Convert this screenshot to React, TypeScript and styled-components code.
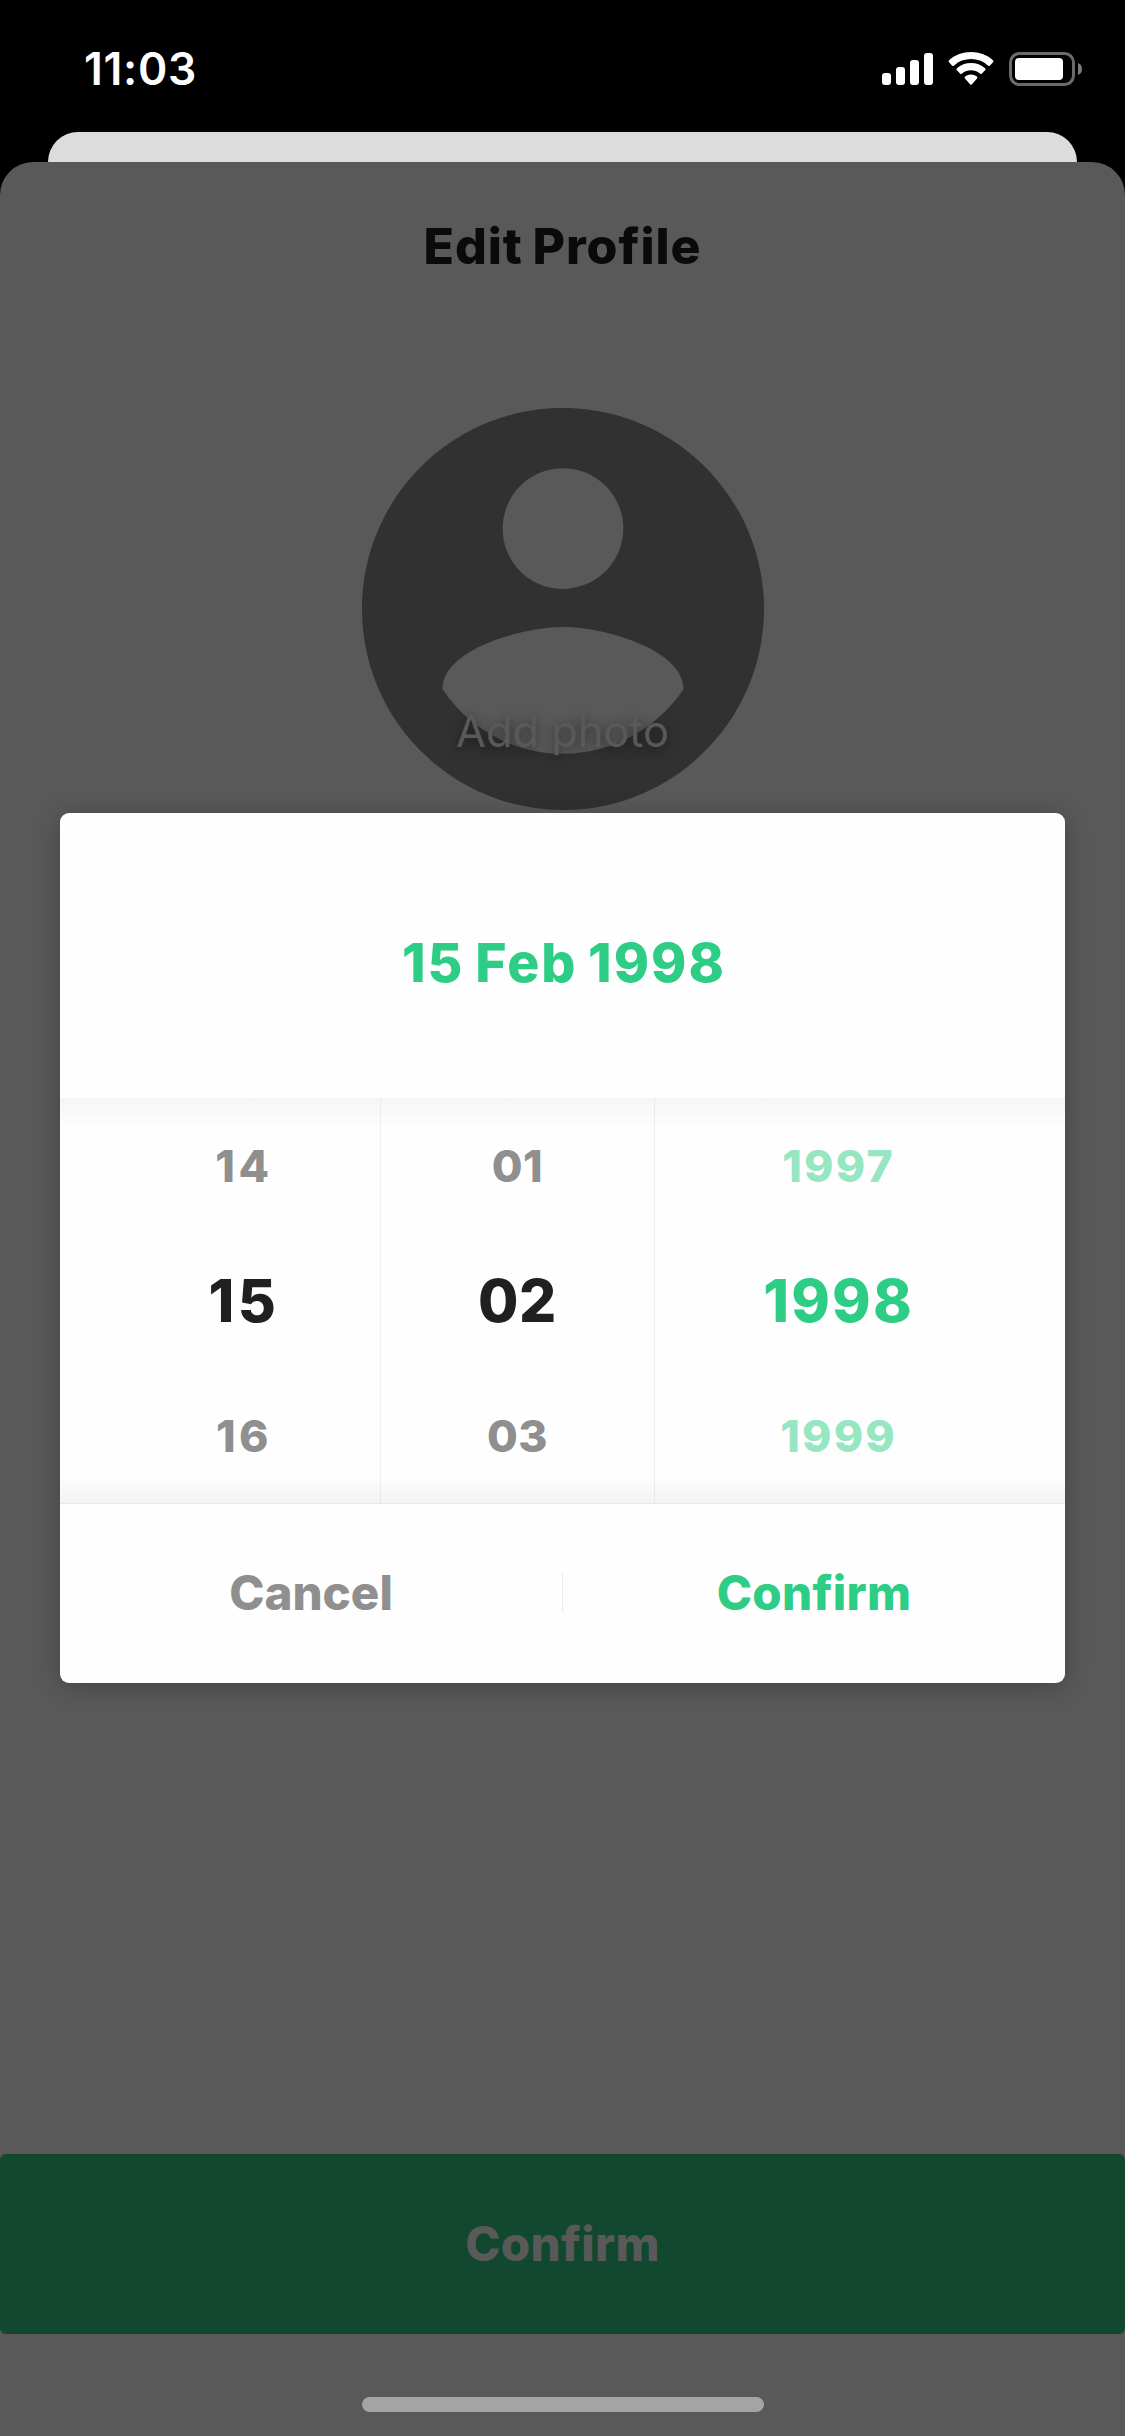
import React from "react";
import styled, { createGlobalStyle } from "styled-components";

const GlobalStyle = createGlobalStyle`
  * { box-sizing: border-box; }
  body {
    margin: 0;
    background: #000;
    font-family: Inter, "Liberation Sans", sans-serif;
  }
  button {
    font-family: inherit;
  }
`;

const GREEN = "#2dcd86";

const Screen = styled.div`
  position: relative;
  display: flex;
  flex-direction: column;
  width: 1125px;
  height: 2436px;
  background: #000;
  overflow: hidden;
`;

const StatusBar = styled.header`
  display: flex;
  align-items: center;
  justify-content: space-between;
  height: 132px;
  padding: 6px 43px 0 84px;
`;

const Time = styled.span`
  color: #fff;
  font-size: 44.5px;
  font-weight: 600;
  line-height: 54px;
  letter-spacing: 0.7px;
`;

const StatusIcons = styled.svg`
  display: block;
  width: 200px;
  height: 34px;
`;

const BackCard = styled.div`
  height: 30px;
  margin: 0 48px;
  border-radius: 30px 30px 0 0;
  background: #dcdcdc;
`;

const Sheet = styled.main`
  display: flex;
  flex-direction: column;
  align-items: center;
  flex: 1;
  border-radius: 33px 33px 0 0;
  background: #595959;
`;

const SheetTitle = styled.h1`
  margin: 54px 0 0;
  color: #0a0a0a;
  font-size: 50px;
  font-weight: 800;
  line-height: 60px;
  letter-spacing: 0.9px;
  word-spacing: -2px;
`;

const Avatar = styled.div`
  display: flex;
  flex-direction: column;
  justify-content: flex-end;
  align-items: center;
  position: relative;
  width: 402px;
  height: 402px;
  margin-top: 132px;
`;

const AvatarGlyph = styled.svg`
  position: absolute;
  inset: 0;
  width: 402px;
  height: 402px;
  fill: #313131;
`;

const AddPhoto = styled.span`
  position: relative;
  margin-bottom: 51px;
  color: #595959;
  font-size: 43.3px;
  font-weight: 400;
  line-height: 56px;
  text-shadow: 0 3px 12px rgba(0, 0, 0, 0.5);
`;

const SubmitButton = styled.button`
  width: 100%;
  height: 180px;
  margin-top: auto;
  padding: 0;
  border: 0;
  border-radius: 6px;
  background: #11482f;
  color: #595959;
  font-size: 47.5px;
  font-weight: 800;
  line-height: 58px;
  letter-spacing: 0.3px;
`;

const HomeIndicator = styled.div`
  width: 402px;
  height: 15px;
  margin: 63px 0 24px;
  border-radius: 8px;
  background: #a4a4a4;
`;

const Dialog = styled.section`
  position: absolute;
  top: 813px;
  left: 60px;
  display: flex;
  flex-direction: column;
  width: 1005px;
  height: 870px;
  border-radius: 9px;
  background: #fefefe;
  box-shadow: 0 3px 24px rgba(0, 0, 0, 0.25);
`;

const DialogTitle = styled.h2`
  display: flex;
  align-items: center;
  justify-content: center;
  height: 285px;
  margin: 0;
  padding: 15px 0 0 3px;
  color: ${GREEN};
  font-size: 53.5px;
  font-weight: 800;
  line-height: 64px;
  letter-spacing: 2px;
  word-spacing: -3px;
`;

const Picker = styled.div`
  display: grid;
  grid-template-columns: 3fr 3fr 4fr;
  height: 406px;
  padding: 0 45px;
  border-bottom: 1px solid #e8e8e8;
  background: linear-gradient(
    #f5f5f5,
    #fefefe 30px,
    #fefefe 376px,
    #f3f3f3
  );
`;

const Column = styled.div<{ $tracking: number }>`
  display: grid;
  grid-template-rows: repeat(3, 135px);
  place-items: center;
  letter-spacing: ${({ $tracking }) => $tracking}px;
  padding-left: ${({ $tracking }) => $tracking}px;
  & + & {
    border-left: 1px solid rgba(0, 0, 0, 0.05);
  }
`;

const Option = styled.span<{ $active: boolean; $accent: boolean }>`
  color: ${({ $active, $accent }) =>
    $accent ? ($active ? GREEN : "#96e6c2") : $active ? "#202020" : "#8f8f8f"};
  font-size: ${({ $active }) => ($active ? 58.5 : 44.5)}px;
  font-weight: 800;
  line-height: 72px;
`;

const Actions = styled.footer`
  display: flex;
  align-items: center;
  flex: 1;
  padding-bottom: 2px;
`;

const Divider = styled.div`
  width: 1px;
  height: 39px;
  background: #ececec;
`;

const ActionButton = styled.button<{ $primary?: boolean }>`
  flex: 1;
  padding: 0;
  border: 0;
  background: none;
  color: ${({ $primary }) => ($primary ? GREEN : "#8f8f8f")};
  font-size: 47.5px;
  font-weight: 800;
  line-height: 58px;
  letter-spacing: ${({ $primary }) => ($primary ? 0.3 : 0)}px;
`;

const columns = [
  { values: ["14", "15", "16"], accent: false, tracking: 3.5 },
  { values: ["01", "02", "03"], accent: false, tracking: 0.5 },
  { values: ["1997", "1998", "1999"], accent: true, tracking: 2.2 },
];

export default function App() {
  return (
    <>
      <GlobalStyle />
      <Screen>
        <StatusBar>
          <Time>11:03</Time>
          <StatusIcons viewBox="882 52 200 34" aria-hidden="true">
            <g fill="#fff">
              <rect x="882" y="73" width="9" height="12" rx="3" />
              <rect x="896" y="67" width="9" height="18" rx="3" />
              <rect x="910" y="60" width="9" height="25" rx="3" />
              <rect x="924" y="53" width="9" height="32" rx="3" />
              <path d="M949 62.3Q948 61.2 949.1 60.2C961 49.3 981 49.3 992.900 60.2Q994 61.2 993 62.3L990 65.400Q989 66.400 987.900 65.400C978.500 57 963.500 57 954.100 65.400Q953 66.400 952 65.400Z" />
              <path d="M956.900 70.300Q955.800 69.200 956.900 68.200C964.500 61.300 977.500 61.300 985.100 68.200Q986.200 69.200 985.100 70.300L982 73.400Q981 74.400 979.900 73.500C974.900 69.200 967.100 69.200 962.100 73.500Q961 74.400 960 73.400Z" />
              <path d="M965 78.400Q964 77.300 965.100 76.400C968.500 73.700 973.500 73.700 976.900 76.400Q978 77.300 977 78.400L972 84.200Q971 85.200 970 84.200Z" />
              <rect x="1015" y="58" width="48" height="22" rx="4" />
            </g>
            <rect x="1010.500" y="53.500" width="63" height="31" rx="9" fill="none" stroke="#6b6b6b" strokeWidth="3" />
            <path d="M1078 63C1083.300 64.500 1083.300 73.500 1078 75Z" fill="#7c7c7c" />
          </StatusIcons>
        </StatusBar>
        <BackCard />
        <Sheet>
          <SheetTitle>Edit Profile</SheetTitle>
          <Avatar>
            <AvatarGlyph viewBox="2 2 20 20" aria-hidden="true">
              <path d="M12 2C6.480 2 2 6.480 2 12s4.480 10 10 10 10-4.480 10-10S17.520 2 12 2zm0 3c1.660 0 3 1.340 3 3s-1.340 3-3 3-3-1.340-3-3 1.340-3 3-3zm0 14.200c-2.500 0-4.710-1.280-6-3.220.030-1.990 4-3.080 6-3.080 1.990 0 5.970 1.090 6 3.080-1.290 1.940-3.500 3.220-6 3.220z" />
            </AvatarGlyph>
            <AddPhoto>Add photo</AddPhoto>
          </Avatar>
          <SubmitButton>Confirm</SubmitButton>
          <HomeIndicator />
        </Sheet>
        <Dialog role="dialog">
          <DialogTitle>15 Feb 1998</DialogTitle>
          <Picker>
            {columns.map(({ values, accent, tracking }) => (
              <Column key={values[1]} $tracking={tracking}>
                {values.map((value, i) => (
                  <Option key={value} $active={i === 1} $accent={accent}>
                    {value}
                  </Option>
                ))}
              </Column>
            ))}
          </Picker>
          <Actions>
            <ActionButton>Cancel</ActionButton>
            <Divider />
            <ActionButton $primary>Confirm</ActionButton>
          </Actions>
        </Dialog>
      </Screen>
    </>
  );
}
